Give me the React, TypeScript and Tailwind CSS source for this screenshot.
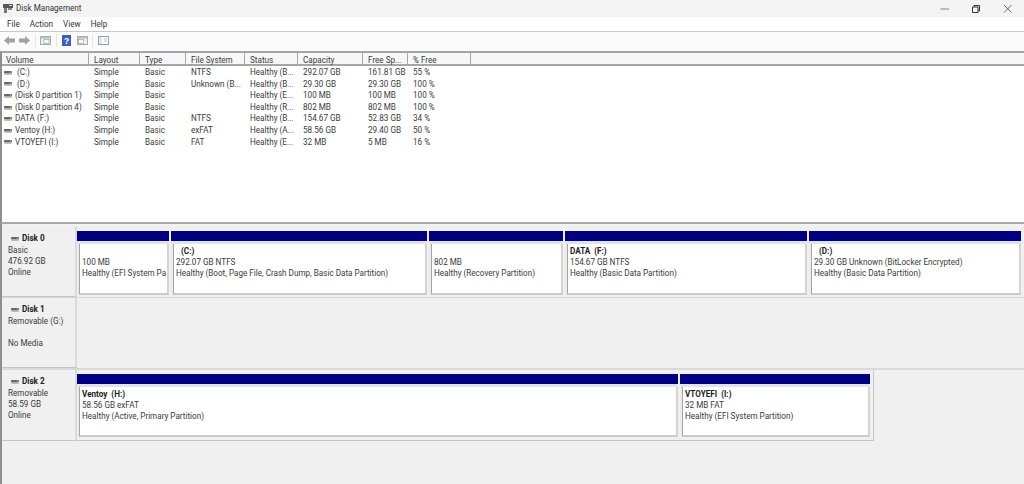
import React from "react";

const rows = [
  ["\u00a0(C:)", "Simple", "Basic", "NTFS", "Healthy (B...", "292.07 GB", "161.81 GB", "55 %"],
  ["\u00a0(D:)", "Simple", "Basic", "Unknown (B...", "Healthy (B...", "29.30 GB", "29.30 GB", "100 %"],
  ["(Disk 0 partition 1)", "Simple", "Basic", "", "Healthy (E...", "100 MB", "100 MB", "100 %"],
  ["(Disk 0 partition 4)", "Simple", "Basic", "", "Healthy (R...", "802 MB", "802 MB", "100 %"],
  ["DATA (F:)", "Simple", "Basic", "NTFS", "Healthy (B...", "154.67 GB", "52.83 GB", "34 %"],
  ["Ventoy (H:)", "Simple", "Basic", "exFAT", "Healthy (A...", "58.56 GB", "29.40 GB", "50 %"],
  ["VTOYEFI (I:)", "Simple", "Basic", "FAT", "Healthy (E...", "32 MB", "5 MB", "16 %"],
];

const cols = [
  { name: "Volume", cls: "w-[87px]" },
  { name: "Layout", cls: "w-[51px]" },
  { name: "Type", cls: "w-[46px]" },
  { name: "File System", cls: "w-[59px]" },
  { name: "Status", cls: "w-[53px]" },
  { name: "Capacity", cls: "w-[65px]" },
  { name: "Free Sp...", cls: "w-[45px]" },
  { name: "% Free", cls: "w-[63px]" },
];

function DiskIcon() {
  return (
    <svg width="8" height="4" viewBox="0 0 8 4" className="shrink-0">
      <rect x="0" y="0" width="8" height="2.6" rx="0.8" fill="#666" />
      <rect x="0.4" y="2.6" width="7.2" height="1.2" fill="#b0b0b0" />
      <rect x="5.8" y="0.7" width="1.4" height="0.8" fill="#c8c8c8" />
    </svg>
  );
}

function Part({ w, name, l2, l3, pad = "" }: { w: string; name?: string; l2: string; l3: string; pad?: string }) {
  return (
    <div className={`${w} shrink-0 flex flex-col bg-[#ececec]`}>
      <div className="h-[10px] bg-[#000080]" />
      <div className="h-[3px] bg-[#dfe3ea]" />
      <div className="flex-1 ml-[2px] bg-white border-l border-l-[#a4a4a4] border-r-2 border-r-[#d4d4d4] border-b-2 border-b-[#c9c9c9] pl-[2px] pt-[2px] leading-[11px] text-[#3a3a3a]">
        <div className={`h-[11px] whitespace-pre font-bold text-[#1c1c1c] ${pad}`}>{name ?? ""}</div>
        <div className="h-[11px] whitespace-nowrap">{l2}</div>
        <div className="h-[11px] whitespace-nowrap">{l3}</div>
      </div>
    </div>
  );
}

function DiskLabel({ name, l2, l3, l4 }: { name: string; l2: string; l3?: string; l4: string }) {
  return (
    <div className="w-[75px] shrink-0 pl-[6px] pt-[6px] leading-[11px] text-[#3a3a3a] border-r-2 border-r-[#dadada] border-b border-b-[#c4c4c4]">
      <div className="flex items-center gap-[3px] h-[11px] pl-[3px]">
        <DiskIcon />
        <span className="font-bold text-[#1c1c1c]">{name}</span>
      </div>
      <div className="h-[11px] mt-[0.5px]">{l2}</div>
      <div className="h-[11px]">{l3 ?? ""}</div>
      <div className="h-[11px]">{l4}</div>
    </div>
  );
}

export default function App() {
  return (
    <div className="w-[1024px] h-[484px] overflow-hidden flex flex-col bg-[#f0f0f0] text-[8.15px] text-[#3a3a3a] font-['Roboto','Noto_Sans',sans-serif]">
      {/* title bar */}
      <div className="h-[17px] shrink-0 bg-[#f3f3f3] flex items-center pl-[2px] text-[#333]">
        <svg width="12" height="11" viewBox="0 0 12 11" className="mr-[2px]">
          <rect x="1" y="1" width="10" height="4" fill="#555" />
          <rect x="2" y="5" width="3" height="5" fill="#777" />
          <rect x="6" y="5" width="4" height="2" fill="#888" />
          <rect x="7" y="2" width="3" height="1" fill="#ddd" />
        </svg>
        <span>Disk Management</span>
        <div className="ml-auto flex items-center">
          <svg width="10" height="10" viewBox="0 0 10 10" className="mr-[21px]"><path d="M0.5 5H9" stroke="#666" strokeWidth="0.8" /></svg>
          <svg width="10" height="10" viewBox="0 0 10 10" className="mr-[22px]"><path d="M1.5 3h5.5v5.5h-5.5zM3 3V1.5h5.5V7H7" stroke="#333" strokeWidth="1" fill="none" /></svg>
          <svg width="10" height="10" viewBox="0 0 10 10" className="mr-[11px]"><path d="M1 1l7.5 7.5M8.5 1L1 8.5" stroke="#444" strokeWidth="0.8" /></svg>
        </div>
      </div>
      {/* menu */}
      <div className="h-[15px] shrink-0 bg-white border-b border-b-[#c8c8c8] flex items-center pl-[7px] gap-[10px] text-[#333]">
        <span>File</span><span>Action</span><span>View</span><span>Help</span>
      </div>
      {/* toolbar */}
      <div className="h-[19px] shrink-0 bg-[#fbfbfb] flex items-center pl-[4px] pb-[2px]">
        <svg width="11" height="9" viewBox="0 0 11 9"><path d="M0 4.5L5 0v2.5h6v4H5V9z" fill="#9aa5a5" /></svg>
        <svg width="11" height="9" viewBox="0 0 11 9" className="ml-[4px]"><path d="M11 4.5L6 0v2.5H0v4h6V9z" fill="#9aa5a5" /></svg>
        <div className="w-px h-[13px] bg-[#e6e6e6] ml-[5px] mr-[4px]" />
        <svg width="11" height="9" viewBox="0 0 11 9"><rect x="0.5" y="0.5" width="10" height="8" fill="#eef0ee" stroke="#a8aca8" /><rect x="0.5" y="0.5" width="10" height="2" fill="#b4bcc0" /><rect x="4" y="3.5" width="5" height="4" fill="#fff" stroke="#7f9a8f" strokeWidth="0.6" /></svg>
        <div className="w-px h-[13px] bg-[#e6e6e6] ml-[5px] mr-[5px]" />
        <svg width="9" height="11" viewBox="0 0 9 11"><rect width="9" height="11" fill="#3f5fb8" /><text x="4.5" y="8.6" textAnchor="middle" fontSize="8.5" fontWeight="700" fill="#fff" fontFamily="Liberation Sans">?</text></svg>
        <svg width="11" height="9" viewBox="0 0 11 9" className="ml-[6px]"><rect x="0.5" y="0.5" width="10" height="8" fill="#eef0ee" stroke="#a8aca8" /><rect x="0.5" y="0.5" width="10" height="2" fill="#b4bcc0" /><rect x="1.5" y="3.5" width="5" height="4" fill="#fff" stroke="#7f9a8f" strokeWidth="0.6" /></svg>
        <div className="w-px h-[13px] bg-[#e6e6e6] ml-[4px] mr-[5px]" />
        <svg width="11" height="9" viewBox="0 0 11 9"><rect x="0.5" y="0.5" width="10" height="8" fill="#fff" stroke="#8ea0b4" /><rect x="1" y="1" width="3" height="7" fill="#dfe7f2" /><path d="M6 3h3M6 5h3" stroke="#9fb0c4" strokeWidth="0.7" /></svg>
      </div>
      {/* list */}
      <div className="h-[171px] shrink-0 bg-white border-l-2 border-l-[#8e8e8e] border-t-2 border-t-[#a4a4a4] flex flex-col">
        <div className="h-[13px] shrink-0 flex bg-[#f7f7f7] border-b-2 border-b-[#a6a6a6] leading-[12px]">
          {cols.map((c, i) => (
            <div key={c.name} className={`${c.cls} shrink-0 ${i === 0 ? "pl-[4px]" : "pl-[5px]"} pt-[1px] border-r border-r-[#a6a6a6]`}>{c.name}</div>
          ))}
        </div>
        <div className="flex-1 pt-[1px]">
          {rows.map((r) => (
            <div key={r[0]} className="flex h-[11.6px] leading-[11.6px]">
              {r.map((cell, i) => (
                <div key={i} className={`${cols[i].cls} shrink-0 whitespace-nowrap ${i === 0 ? "flex items-center gap-[3px] pl-[2px]" : "pl-[5px]"}`}>
                  {i === 0 && <DiskIcon />}
                  <span>{cell}</span>
                </div>
              ))}
            </div>
          ))}
        </div>
      </div>
      {/* splitter */}
      <div className="h-[4px] shrink-0 bg-[#f3f3f3] border-t-2 border-t-[#a8a8a8] border-l-2 border-l-[#8e8e8e]" />
      {/* disks */}
      <div className="flex-1 border-l-2 border-l-[#8e8e8e] flex flex-col pt-[1px]">
        <div className="h-[71px] flex shrink-0 border-b border-b-[#d8d8d8]">
          <DiskLabel name="Disk 0" l2="Basic" l3="476.92 GB" l4="Online" />
          <div className="flex-1 flex gap-[2px] pt-[4px] pb-[2px] pr-[1px]">
            <Part w="w-[92px]" l2="100 MB" l3="Healthy (EFI System Pa" />
            <Part w="w-[256px]" name="(C:)" pad="pl-[5px]" l2="292.07 GB NTFS" l3="Healthy (Boot, Page File, Crash Dump, Basic Data Partition)" />
            <Part w="w-[134px]" l2="802 MB" l3="Healthy (Recovery Partition)" />
            <Part w="w-[242px]" name="DATA  (F:)" l2="154.67 GB NTFS" l3="Healthy (Basic Data Partition)" />
            <Part w="w-[212px]" name="(D:)" pad="pl-[5px]" l2="29.30 GB Unknown (BitLocker Encrypted)" l3="Healthy (Basic Data Partition)" />
          </div>
        </div>
        <div className="h-[72px] flex shrink-0 border-b-2 border-b-[#d8d8d8]">
          <DiskLabel name="Disk 1" l2="Removable (G:)" l4="No Media" />
          <div className="flex-1" />
        </div>
        <div className="h-[71px] flex shrink-0">
          <DiskLabel name="Disk 2" l2="Removable" l3="58.59 GB" l4="Online" />
          <div className="w-[797px] flex gap-[2px] pt-[4px] pb-[3px] pr-[3px] border-r border-r-[#c8c8c8] border-b border-b-[#c4c4c4]">
            <Part w="w-[601px]" name="Ventoy  (H:)" l2="58.56 GB exFAT" l3="Healthy (Active, Primary Partition)" />
            <Part w="w-[190px]" name="VTOYEFI  (I:)" l2="32 MB FAT" l3="Healthy (EFI System Partition)" />
          </div>
        </div>
      </div>
    </div>
  );
}
